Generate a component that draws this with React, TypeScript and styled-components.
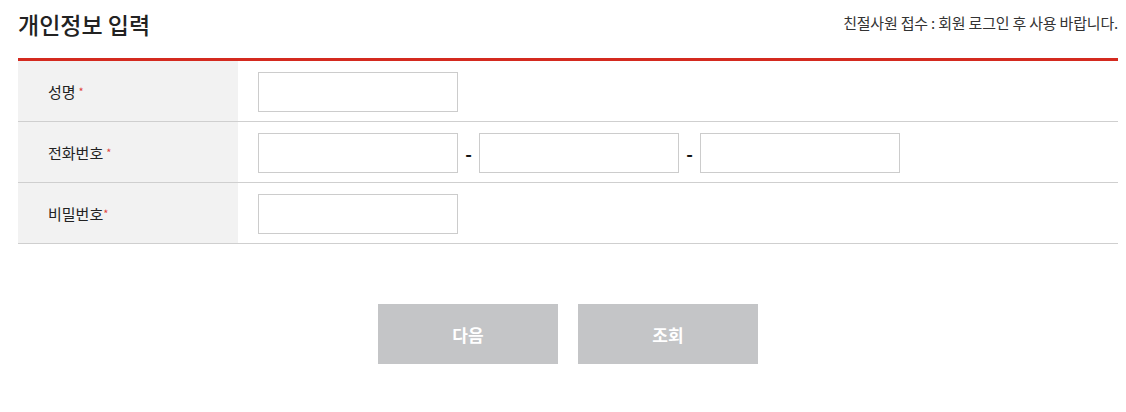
import React from 'react';
import styled, { createGlobalStyle } from 'styled-components';

const GlobalStyle = createGlobalStyle`
  body {
    margin: 0;
    background: #fff;
    font-family: 'Noto Sans CJK KR', 'Noto Sans', sans-serif;
    color: #333;
  }
`;

const fields = [
  { label: '성명', parts: 1 },
  { label: '전화번호', parts: 3 },
  { label: '비밀번호', parts: 1, tight: true },
];

const App = () => {
  return (
    <Page>
      <GlobalStyle />
      <Header>
        <Title>개인정보 입력</Title>
        <Notice>친절사원 접수 : 회원 로그인 후 사용 바랍니다.</Notice>
      </Header>
      <FormTable>
        {fields.map(({ label, parts, tight }) => (
          <Row key={label}>
            <Label>
              {label}
              <Required $tight={tight}>*</Required>
            </Label>
            <Cell>
              {Array.from({ length: parts }).map((_, i) => (
                <React.Fragment key={i}>
                  {i > 0 && <Dash>-</Dash>}
                  <TextInput type={label === '비밀번호' ? 'password' : 'text'} />
                </React.Fragment>
              ))}
            </Cell>
          </Row>
        ))}
      </FormTable>
      <Buttons>
        <Button>다음</Button>
        <Button>조회</Button>
      </Buttons>
    </Page>
  );
};

export default App;

const Page = styled.div`
  padding: 0 8px 0 18px;
`;

const Header = styled.div`
  display: flex;
  justify-content: space-between;
  align-items: center;
  height: 48px;
  margin-bottom: 10px;
`;

const Title = styled.h2`
  margin: 0;
  font-size: 23px;
  font-weight: 500;
  color: #222;
`;

const Notice = styled.p`
  margin: 0 0 4px;
  font-size: 15px;
  color: #333;
  letter-spacing: -0.2px;
`;

const FormTable = styled.div`
  border-top: 3px solid #d42a1f;
`;

const Row = styled.div`
  display: flex;
  height: 60px;
  border-bottom: 1px solid #cfcfcf;
`;

const Label = styled.div`
  width: 190px;
  padding-left: 30px;
  background: #f2f2f2;
  display: flex;
  align-items: center;
  font-size: 15px;
  color: #222;
`;

const Required = styled.span<{ $tight?: boolean }>`
  color: #e0443a;
  font-size: 11px;
  margin-left: ${(p) => (p.$tight ? '0' : '3px')};
`;

const Cell = styled.div`
  flex: 1;
  display: flex;
  align-items: center;
  padding: 1px 0 0 20px;
`;

const TextInput = styled.input`
  width: 200px;
  height: 40px;
  box-sizing: border-box;
  border: 1px solid #cccccc;
  background: #fff;
  outline: none;
`;

const Dash = styled.span`
  width: 21px;
  text-align: center;
  font-size: 18px;
  font-weight: 700;
  color: #111;
`;

const Buttons = styled.div`
  display: flex;
  justify-content: center;
  gap: 20px;
  margin-top: 60px;
`;

const Button = styled.button`
  width: 180px;
  height: 60px;
  border: 0;
  background: #c4c5c7;
  color: #fff;
  font-family: 'Noto Sans CJK KR', sans-serif;
  font-size: 17px;
  font-weight: 700;
`;
